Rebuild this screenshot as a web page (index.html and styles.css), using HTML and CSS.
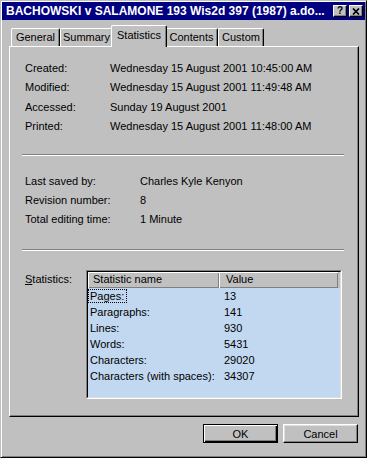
FILE: index.html
```html
<!DOCTYPE html>
<html>
  <head>
    <title>Document Properties - Statistics</title>
    <meta charset="utf-8" />
    <link rel="stylesheet" href="styles.css">
  </head>
  <body>
    <div class="window">
      <div class="titlebar">
        <span class="title">BACHOWSKI v SALAMONE 193 Wis2d 397 (1987) a.do...</span>
        <span class="cbtn help">?</span>
        <span class="cbtn close">
          <svg width="8" height="7" viewBox="0 0 8 7">
            <path d="M1 0.5l6 6M7 0.5l-6 6" stroke="#000" stroke-width="1.7" fill="none" />
          </svg>
        </span>
      </div>

      <div class="body">
        <div class="tabs">
          <div class="tab t-general">General</div>
          <div class="tab t-summary">Summary</div>
          <div class="tab t-stats active">Statistics</div>
          <div class="tab t-contents">Contents</div>
          <div class="tab t-custom">Custom</div>
        </div>

        <div class="panel">
          <div class="props dates">
            <span>Created:</span><span>Wednesday 15 August 2001 10:45:00 AM</span>
            <span>Modified:</span><span>Wednesday 15 August 2001 11:49:48 AM</span>
            <span>Accessed:</span><span>Sunday 19 August 2001</span>
            <span>Printed:</span><span>Wednesday 15 August 2001 11:48:00 AM</span>
          </div>

          <div class="sep sep1"></div>

          <div class="props saved">
            <span>Last saved by:</span><span>Charles Kyle Kenyon</span>
            <span>Revision number:</span><span>8</span>
            <span>Total editing time:</span><span>1 Minute</span>
          </div>

          <div class="sep sep2"></div>

          <div class="stats">
            <div class="stats-label"><u>S</u>tatistics:</div>
            <div class="listbox">
              <div class="list">
                <div class="list-head">
                  <div class="hcell h-name">Statistic name</div>
                  <div class="hcell h-value">Value</div>
                </div>
                <div class="list-rows">
                  <span><span class="focus">Pages:</span></span><span>13</span>
                  <span>Paragraphs:</span><span>141</span>
                  <span>Lines:</span><span>930</span>
                  <span>Words:</span><span>5431</span>
                  <span>Characters:</span><span>29020</span>
                  <span>Characters (with spaces):</span><span>34307</span>
                </div>
              </div>
            </div>
          </div>
        </div>

        <div class="buttons">
          <div class="btn default"><span>OK</span></div>
          <div class="btn">Cancel</div>
        </div>
      </div>
    </div>
  </body>
</html>
```

FILE: styles.css
```css
body {
  margin: 0;
  background: #c0c0c0;
  font-family: "Liberation Sans", Arial, sans-serif;
  font-size: 11px;
  color: #000;
}
.window {
  width: 367px;
  height: 458px;
  box-sizing: border-box;
  padding: 1px;
  border: 1px solid;
  border-color: #c0c0c0 #000 #000 #c0c0c0;
  box-shadow: inset 1px 1px #fff, inset -1px -1px #808080;
  display: flex;
  flex-direction: column;
}
.titlebar {
  height: 18px;
  background: #000080;
  display: flex;
  align-items: center;
  padding: 0 2px 0 4px;
}
.title {
  flex: 1;
  color: #fff;
  font-weight: bold;
  font-size: 12px;
  white-space: nowrap;
  overflow: hidden;
}
.cbtn {
  width: 12px;
  height: 10px;
  background: #c0c0c0;
  border: 1px solid;
  border-color: #fff #000 #000 #fff;
  box-shadow: inset -1px -1px #808080;
  display: flex;
  align-items: center;
  justify-content: center;
  font-weight: bold;
  font-size: 10px;
  line-height: 10px;
}
.cbtn.close {
  margin-left: 2px;
}
.body {
  flex: 1;
  padding: 6px 6px 0 7px;
}
.tabs {
  display: flex;
  align-items: flex-end;
  height: 20px;
  margin-left: 2px;
}
.tab {
  box-sizing: border-box;
  height: 18px;
  line-height: 17px;
  border: 1px solid;
  border-color: #fff #000 transparent #fff;
  border-bottom: 0;
  border-radius: 2px 2px 0 0;
  box-shadow: inset -1px 0 #808080;
  text-align: center;
}
.t-general { width: 49px; }
.t-summary { width: 53px; }
.t-stats { width: 52px; }
.t-contents { width: 53px; }
.t-custom { width: 46px; }
.tab.active {
  position: relative;
  z-index: 1;
  height: 22px;
  line-height: 18px;
  width: 56px;
  margin: 0 -2px -1px -2px;
  background: #c0c0c0;
}
.panel {
  height: 371px;
  box-sizing: border-box;
  border: 1px solid;
  border-color: #fff #000 #000 #fff;
  box-shadow: inset -1px -1px #808080;
  padding: 11px 14px 0 15px;
}
.props {
  display: grid;
  align-items: center;
}
.dates {
  grid-template-columns: 85px auto;
  grid-auto-rows: 19.5px;
}
.saved {
  grid-template-columns: 115px auto;
  grid-auto-rows: 19px;
  margin-top: 15px;
}
.sep {
  border-top: 1px solid #808080;
  border-bottom: 1px solid #fff;
  margin-left: -3px;
}
.sep1 { margin-top: 18px; }
.sep2 { margin-top: 21px; }
.stats {
  display: flex;
  margin-top: 19px;
}
.stats-label {
  width: 61px;
  padding-top: 3px;
}
.listbox {
  width: 256px;
  height: 129px;
  box-sizing: border-box;
  border: 1px solid;
  border-color: #808080 #fff #fff #808080;
}
.list {
  height: 100%;
  box-sizing: border-box;
  border: 1px solid;
  border-color: #000 #dfdfdf #dfdfdf #000;
  background: #c2d8f0;
  display: flex;
  flex-direction: column;
}
.list-head {
  display: flex;
  height: 16px;
  background: #c0c0c0;
}
.hcell {
  box-sizing: border-box;
  height: 16px;
  line-height: 15px;
  box-shadow: inset 1px 1px #fff, inset -1px -1px #808080;
}
.h-name {
  width: 131px;
  padding-left: 5px;
}
.h-value {
  width: 119px;
  padding-left: 7px;
}
.list-rows {
  display: grid;
  grid-template-columns: 135px auto;
  grid-auto-rows: 16px;
  align-items: center;
  padding-left: 1px;
}
.list-rows > span:nth-child(odd) {
  padding-left: 1px;
}
.focus {
  display: inline-block;
  border: 1px dotted #000;
  padding: 0 2px 0 1px;
  margin-left: -2px;
  line-height: 12px;
}
.buttons {
  display: flex;
  justify-content: flex-end;
  gap: 5px;
  margin-top: 7px;
  padding-right: 1px;
}
.btn {
  width: 75px;
  height: 19px;
  box-sizing: border-box;
  border: 1px solid;
  border-color: #fff #000 #000 #fff;
  box-shadow: inset -1px -1px #808080, inset 1px 1px #dfdfdf;
  display: flex;
  align-items: center;
  justify-content: center;
}
.btn.default {
  border: 1px solid #000;
  box-shadow: inset 1px 1px #fff, inset -1px -1px #000, inset -2px -2px #808080;
}
```
